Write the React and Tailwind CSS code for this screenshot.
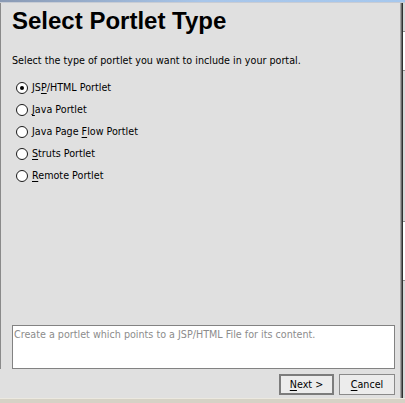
import React, { useState } from 'react';

const portletTypes = [
  { id: 'jsp', pre: 'JS', key: 'P', post: '/HTML Portlet', desc: 'Create a portlet which points to a JSP/HTML File for its content.' },
  { id: 'java', pre: '', key: 'J', post: 'ava Portlet', desc: 'Create a portlet backed by a Java class.' },
  { id: 'pageflow', pre: 'Java Page ', key: 'F', post: 'low Portlet', desc: 'Create a portlet which uses a Java Page Flow.' },
  { id: 'struts', pre: '', key: 'S', post: 'truts Portlet', desc: 'Create a portlet which uses a Struts application.' },
  { id: 'remote', pre: '', key: 'R', post: 'emote Portlet', desc: 'Create a portlet which is hosted by a remote producer.' },
];

function Radio({ checked }) {
  return (
    <span className="w-[12px] h-[12px] rounded-full border border-[#1a1a1a] bg-white flex items-center justify-center shrink-0">
      {checked && <span className="w-[4px] h-[4px] rounded-full bg-black" />}
    </span>
  );
}

export default function App() {
  const [selected, setSelected] = useState('jsp');
  const current = portletTypes.find(p => p.id === selected);

  return (
    <div className="w-[405px] h-[403px] flex flex-col bg-[#e0e0e0] overflow-hidden text-[9.6px] text-black" style={{ fontFamily: '"DejaVu Sans", Tahoma, sans-serif' }}>
      {/* title bar remnant */}
      <div className="h-[3px] shrink-0 bg-gradient-to-r from-[#8a9ab4] via-[#a8c6ea] to-[#a6c8ee] border-b border-[#c8ccd4]" />

      <div className="flex flex-1 min-h-0">
        {/* left edge */}
        <div className="w-[1px] h-[366px] bg-[#8a8a8a] shrink-0" />

        {/* main panel */}
        <div className="flex-1 flex flex-col pl-[11px] pr-[5px]">
          <h1 className="mt-[4px] text-[24px] font-bold leading-[28px]" style={{ fontFamily: '"Liberation Sans", Arial, sans-serif' }}>
            Select Portlet Type
          </h1>

          <p className="mt-[20px] leading-[12px]">
            Select the type of portlet you want to include in your portal.
          </p>

          <div className="mt-[15px] flex flex-col gap-[10px] pl-[4px]">
            {portletTypes.map(p => (
              <label key={p.id} className="flex items-center gap-[4px] h-[12px] cursor-default" onClick={() => setSelected(p.id)}>
                <Radio checked={selected === p.id} />
                <span className="leading-[12px]">
                  {p.pre}<span className="underline underline-offset-2">{p.key}</span>{p.post}
                </span>
              </label>
            ))}
          </div>

          <div className="flex-1" />

          <div className="h-[44px] bg-white border border-[#828282] px-[1px] pt-[3px] leading-[12px] text-[#8c8c8c]">
            {current.desc}
          </div>

          <div className="flex justify-end gap-[5px] mt-[5px] mb-[3px]">
            <button className="w-[55px] h-[21px] border-2 border-[#7c7c7c] bg-[#ececec] leading-none">
              <span className="underline underline-offset-2">N</span>ext &gt;
            </button>
            <button className="w-[56px] h-[21px] border border-[#8a8a8a] bg-[#ececec] leading-none">
              <span className="underline underline-offset-2">C</span>ancel
            </button>
          </div>
        </div>

        {/* right edge: neighbouring window */}
        <div className="w-[5px] flex shrink-0">
          <div className="w-[1px] bg-[#a4a4a4]" />
          <div className="w-[1px] bg-[#6a6a6a]" />
          <div className="w-[1px] bg-[#303030]" />
          <div className="w-[2px] flex flex-col bg-[#d8d8d8]">
            <div className="h-[28px]" />
            <div className="h-[40px] bg-white border-y border-[#909090]" />
            <div className="h-[150px]" />
            <div className="h-[60px] bg-white border-y border-[#909090]" />
          </div>
        </div>
      </div>

      {/* bottom strip */}
      <div className="h-[5px] shrink-0 bg-[#d6d2c6] border-t border-[#ece9e0]" />
    </div>
  );
}
